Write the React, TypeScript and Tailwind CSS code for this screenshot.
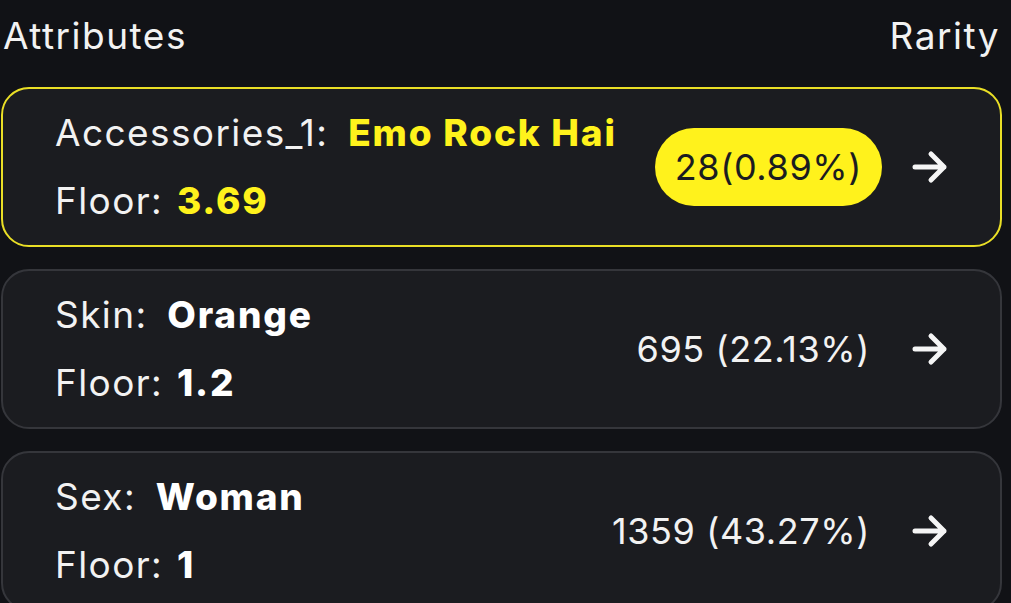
import React from "react";

type Trait = {
  name: string;
  value: string;
  floor: string;
  count: string;
  active?: boolean;
};

const traits: Trait[] = [
  { name: "Accessories_1", value: "Emo Rock Hai", floor: "3.69", count: "28(0.89%)", active: true },
  { name: "Skin", value: "Orange", floor: "1.2", count: "695 (22.13%)" },
  { name: "Sex", value: "Woman", floor: "1", count: "1359 (43.27%)" },
];

const Arrow = () => (
  <svg width="36" height="34" viewBox="0 0 36 34" fill="none" aria-hidden="true">
    <path
      d="M3 17H32M19 4L32 17L19 30"
      stroke="#f5f5f5"
      strokeWidth="5"
      strokeLinecap="round"
      strokeLinejoin="round"
    />
  </svg>
);

const TraitCard = ({ t }: { t: Trait }) => {
  const valueColor = t.active ? "text-[#fff21c]" : "text-white";
  return (
    <div
      className={
        t.active
          ? "flex h-[160px] shrink-0 items-center justify-between rounded-[28px] border-2 border-[#eadf26] bg-[#1b1c20] pl-[52px] pr-[52px]"
          : "flex h-[160px] shrink-0 items-center justify-between rounded-[28px] border-2 border-[#35363b] bg-[#1b1c20] pl-[52px] pr-[52px]"
      }
    >
      <div className="flex flex-col text-[37px] leading-[68px] tracking-[1.4px] text-[#f2f2f2]">
        <div className="whitespace-nowrap">
          {t.name}:{" "}
          <span className={`ml-[8px] font-extrabold tracking-[1.8px] ${valueColor}`}>{t.value}</span>
        </div>
        <div className="whitespace-nowrap">
          Floor:{" "}
          <span className={`ml-[2px] font-extrabold tracking-[1.8px] ${valueColor}`}>{t.floor}</span>
        </div>
      </div>
      <div className="flex items-center gap-[30px]">
        {t.active ? (
          <div className="flex h-[78px] items-center rounded-full bg-[#fff21c] px-[20px] text-[36px] tracking-[0.6px] text-[#1b1c20]">
            {t.count}
          </div>
        ) : (
          <div className="flex h-[78px] items-center px-[12px] text-[36px] tracking-[0.6px] text-[#f2f2f2]">
            {t.count}
          </div>
        )}
        <Arrow />
      </div>
    </div>
  );
};

export default function App() {
  return (
    <div
      className="h-[603px] w-full overflow-hidden bg-[#111216] pl-[1px] pr-[9px]"
      style={{ fontFamily: "Inter, 'Noto Sans', sans-serif" }}
    >
      <div className="flex h-[72px] items-center justify-between px-[2px] text-[37px] tracking-[1.5px] text-[#f2f2f2]">
        <span>Attributes</span>
        <span>Rarity</span>
      </div>
      <div className="flex flex-col gap-[22px] pt-[15px]">
        {traits.map((t) => (
          <TraitCard key={t.name} t={t} />
        ))}
      </div>
    </div>
  );
}
